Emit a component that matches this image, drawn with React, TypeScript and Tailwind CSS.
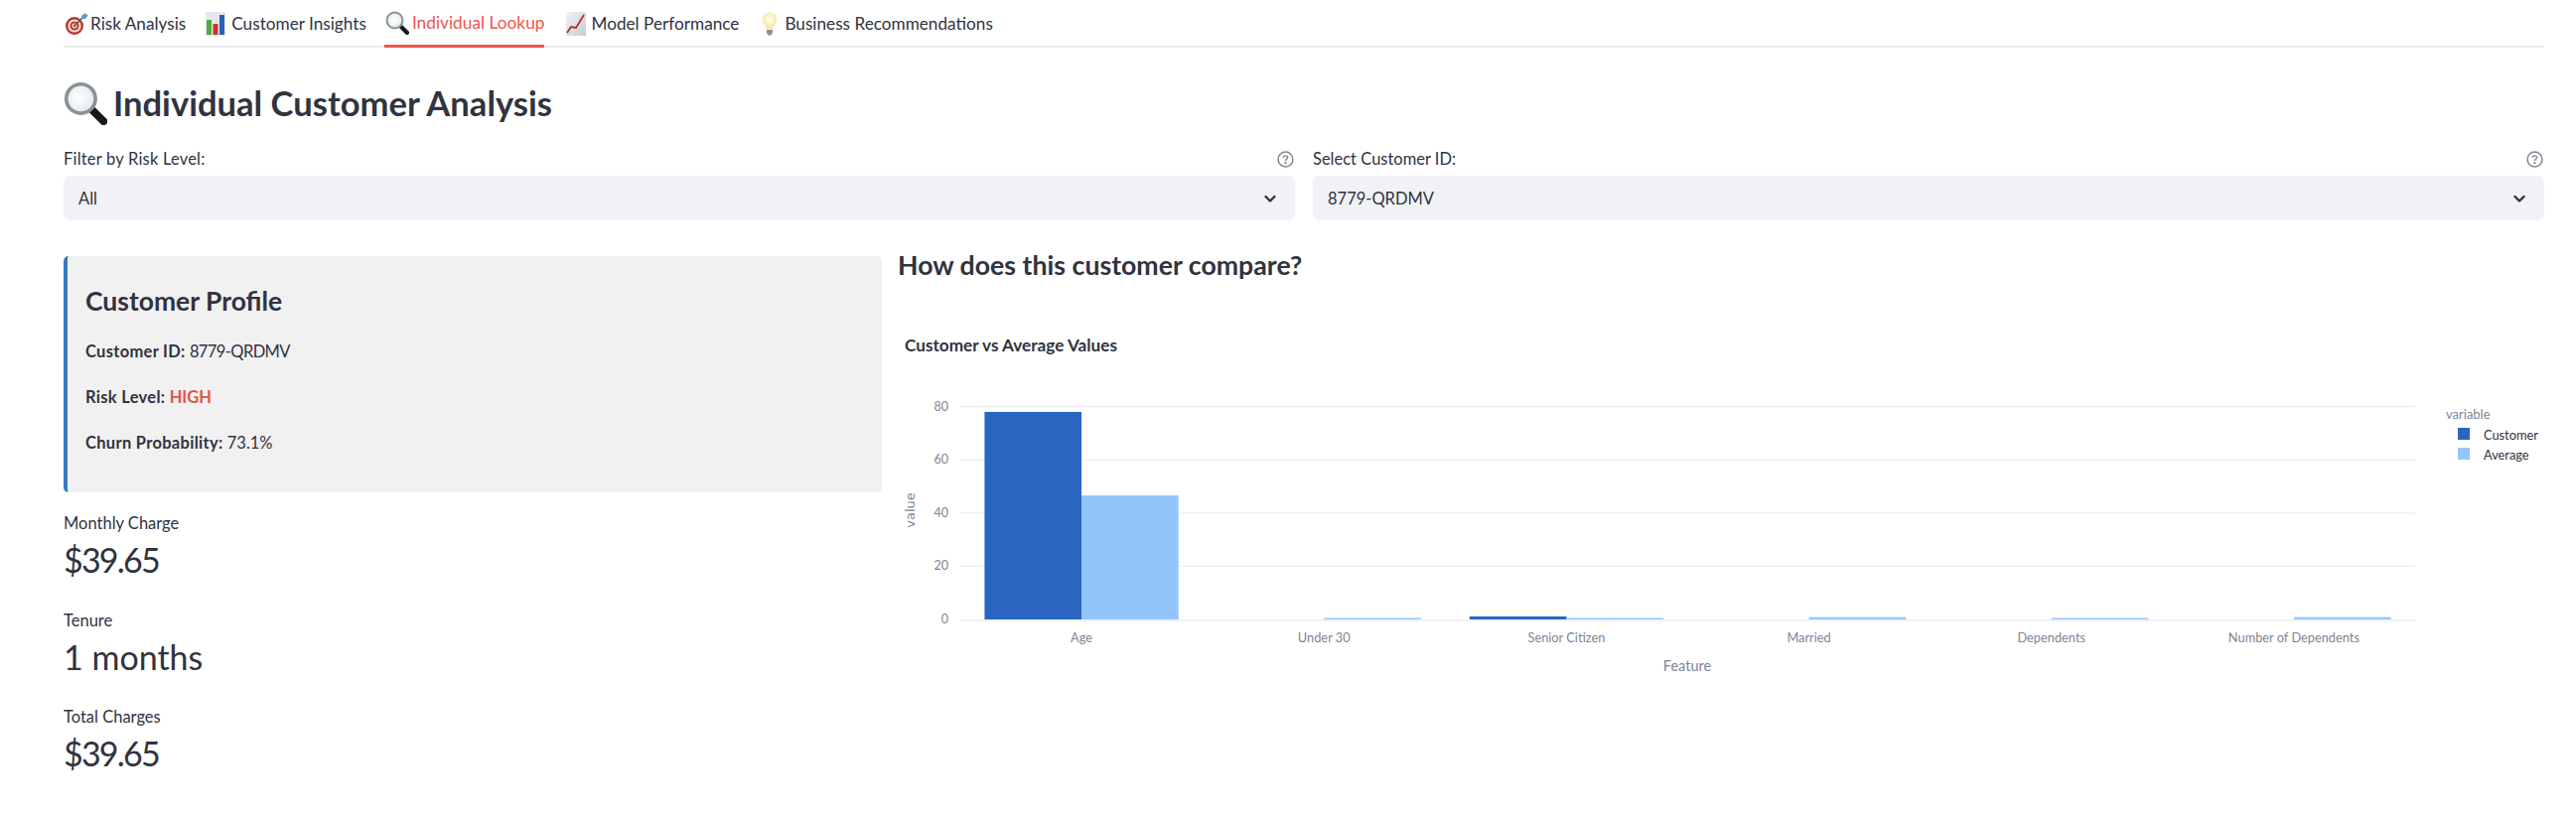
const font = { fontFamily: '"Lato", "Noto Sans", sans-serif' };

const TargetIcon = () => (
  <svg width="24" height="24" viewBox="0 0 24 24">
    <circle cx="10" cy="14" r="9" fill="#b8342c" />
    <circle cx="10" cy="14" r="6.6" fill="#f0e4dc" />
    <circle cx="10" cy="14" r="4.6" fill="#c43a30" />
    <circle cx="10" cy="14" r="2.5" fill="#f0e4dc" />
    <circle cx="10" cy="14" r="1.2" fill="#b8342c" />
    <path d="M10 14 L19 5" stroke="#56606a" strokeWidth="1.6" />
    <path d="M17 4 L21 1 L22 3 L24 3 L21 7 L18 7 Z" fill="#4fa3c7" />
  </svg>
);

const BarsIcon = () => (
  <svg width="20" height="24" viewBox="0 0 20 24">
    <rect x="0" y="0" width="20" height="24" fill="#e3e8ee" />
    <rect x="1" y="8" width="5" height="15" fill="#4caf3c" />
    <rect x="7.5" y="12" width="5" height="11" fill="#c8352b" />
    <rect x="14" y="3" width="5" height="20" fill="#2a62b8" />
  </svg>
);

const LensIcon = ({ size }: { size: number }) => (
  <svg width={size} height={size} viewBox="0 0 24 24">
    <defs>
      <radialGradient id={`lens${size}`} cx="0.45" cy="0.45" r="0.6">
        <stop offset="0" stopColor="#ffffff" />
        <stop offset="1" stopColor="#e2e6e8" />
      </radialGradient>
    </defs>
    <path d="M15 15 L22 22" stroke="#16181a" strokeWidth="4.2" strokeLinecap="round" />
    <circle cx="9.5" cy="9.5" r="8" fill={`url(#lens${size})`} stroke="#8b9296" strokeWidth="2" />
  </svg>
);

const LineIcon = () => (
  <svg width="20" height="24" viewBox="0 0 20 24">
    <defs>
      <linearGradient id="paper" x1="0" y1="0" x2="1" y2="1">
        <stop offset="0" stopColor="#f2f4f6" />
        <stop offset="1" stopColor="#c6ccd4" />
      </linearGradient>
    </defs>
    <rect width="20" height="24" fill="url(#paper)" />
    <path d="M1 21 L5 15 L10 16 L18 3" fill="none" stroke="#b5302a" strokeWidth="1.8" />
  </svg>
);

const BulbIcon = () => (
  <svg width="16" height="24" viewBox="0 0 16 24">
    <defs>
      <radialGradient id="glow" cx="0.5" cy="0.4" r="0.6">
        <stop offset="0" stopColor="#fffdf0" />
        <stop offset="1" stopColor="#f7e49a" />
      </radialGradient>
    </defs>
    <path d="M8 0.5 C3.5 0.5 0.5 3.6 0.5 7.6 C0.5 11.4 4.4 13.2 4.8 17.5 L11.2 17.5 C11.6 13.2 15.5 11.4 15.5 7.6 C15.5 3.6 12.5 0.5 8 0.5 Z" fill="url(#glow)" />
    <path d="M5 18 H11 V21 L9.5 23.5 H6.5 L5 21 Z" fill="#8d8f92" />
  </svg>
);

const tabs = [
  { label: "Risk Analysis", icon: <TargetIcon />, box: "w-[27px] pl-[1px]", gap: "" },
  { label: "Customer Insights", icon: <BarsIcon />, box: "w-[30px] pl-[4px]", gap: "mr-[2px]" },
  { label: "Individual Lookup", icon: <LensIcon size={24} />, box: "w-[28px] pl-[1px]", gap: "", active: true },
  { label: "Model Performance", icon: <LineIcon />, box: "w-[31px] pl-[6px]", gap: "" },
  { label: "Business Recommendations", icon: <BulbIcon />, box: "w-[30px] pl-[7px]", gap: "" },
];

const HelpIcon = () => (
  <svg width="17" height="17" viewBox="0 0 16 16" fill="none" stroke="#7f8290" strokeWidth="1.3">
    <circle cx="8" cy="8" r="7" />
    <path d="M6 6.3 C6 4 10 4 10 6.3 C10 7.8 8 7.8 8 9.4" />
    <circle cx="8" cy="11.5" r="0.4" fill="#7f8290" />
  </svg>
);

const Chevron = () => (
  <svg width="20" height="20" viewBox="0 0 20 20" fill="none" stroke="#31333f" strokeWidth="2.4" strokeLinecap="round" strokeLinejoin="round">
    <path d="M5.5 8 L10 12.5 L14.5 8" />
  </svg>
);

const Picker = ({ label, value, wide, tracking }: { label: string; value: string; wide: string; tracking: string }) => (
  <div className={wide}>
    <div className="flex h-[21px] items-center justify-between pr-[1px] text-[16.5px] text-[#31333f]">
      <span className={tracking}>{label}</span>
      <HelpIcon />
    </div>
    <div className="mt-[6px] flex h-[45px] items-center justify-between rounded-[7px] bg-[#f0f2f6] pl-[15px] pr-[15px] pt-[1px] text-[16.5px] text-[#31333f]">
      <span>{value}</span>
      <Chevron />
    </div>
  </div>
);

const metrics = [
  { label: "Monthly Charge", value: "$39.65", tracking: "tracking-[-1.8px]" },
  { label: "Tenure", value: "1 months", tracking: "" },
  { label: "Total Charges", value: "$39.65", tracking: "tracking-[-1.8px]" },
];

// chart geometry, in the svg's own pixels
const plotLeft = 63;
const plotRight = 1528;
const zeroY = 304;
const unit = 2.68;
const band = (plotRight - plotLeft) / 6;

const groups = [
  { name: "Age", customer: 78, average: 46.6 },
  { name: "Under 30", customer: 0, average: 0.56 },
  { name: "Senior Citizen", customer: 1.12, average: 0.56 },
  { name: "Married", customer: 0, average: 0.85 },
  { name: "Dependents", customer: 0, average: 0.56 },
  { name: "Number of Dependents", customer: 0, average: 0.85 },
];

const CompareChart = () => (
  <svg width="1658" height="380" className="block" style={font}>
    <text x="7" y="34" fontSize="17.2" fontWeight="700" fill="#31333f">Customer vs Average Values</text>
    {[20, 40, 60, 80].map((tick) => (
      <line key={tick} x1={plotLeft} x2={plotRight} y1={zeroY - tick * unit} y2={zeroY - tick * unit} stroke="#eceef2" strokeWidth="1.2" />
    ))}
    <line x1={plotLeft} x2={plotRight} y1={zeroY + 1} y2={zeroY + 1} stroke="#f0f1f5" strokeWidth="2" />
    {[0, 20, 40, 60, 80].map((tick) => (
      <text key={tick} x="51" y={zeroY - tick * unit + 4} fontSize="12.5" textAnchor="end" fill="#808495">{tick}</text>
    ))}
    {groups.map((group, i) => {
      const x = plotLeft + band * i;
      return (
        <g key={group.name}>
          <rect x={x + band * 0.1} y={zeroY - group.customer * unit} width={band * 0.4} height={group.customer * unit} fill="#2a66c0" />
          <rect x={x + band * 0.5} y={zeroY - group.average * unit} width={band * 0.4} height={group.average * unit} fill="#93c5fb" />
          <text x={x + band / 2} y={327} fontSize="12.8" textAnchor="middle" fill="#808495">{group.name}</text>
        </g>
      );
    })}
    <text x="795" y="356" fontSize="14.5" textAnchor="middle" fill="#808495">Feature</text>
    <text transform="translate(17 194) rotate(-90)" fontSize="13" textAnchor="middle" fill="#808495" style={{ fontFamily: '"DejaVu Sans", sans-serif' }}>value</text>
    <text x="1559" y="102" fontSize="13" fill="#808495">variable</text>
    <rect x="1571" y="111" width="12" height="12" fill="#2a66c0" />
    <text x="1597" y="123" fontSize="12.8" fill="#31333f">Customer</text>
    <rect x="1571" y="131" width="12" height="12" fill="#93c5fb" />
    <text x="1597" y="143" fontSize="12.8" fill="#31333f">Average</text>
  </svg>
);

export default function App() {
  return (
    <div className="h-[820px] overflow-hidden bg-white pl-[64px] pr-[32px] text-[#31333f]" style={font}>
      <div className="flex h-[48px] gap-4 border-b-2 border-[#ebecee]">
        {tabs.map((tab) => (
          <div
            key={tab.label}
            className={
              tab.active
                ? "-mb-[2px] flex h-[48px] items-center border-b-[3px] border-[#f0564f] text-[17.3px] text-[#f0564f]"
                : `flex h-[46px] items-center pt-[1px] text-[17.2px] ${tab.gap}`
            }
          >
            <span className={`${tab.box} flex`}>{tab.icon}</span>
            <span>{tab.label}</span>
          </div>
        ))}
      </div>

      <h1 className="mt-[33px] flex h-[46px] items-center gap-[6px] text-[34.6px] font-bold leading-none">
        <LensIcon size={44} />
        <span>Individual Customer Analysis</span>
      </h1>

      <div className="mt-[23px] flex gap-[18px]">
        <Picker label="Filter by Risk Level:" value="All" wide="w-[1240px]" tracking="tracking-[0.2px]" />
        <Picker label="Select Customer ID:" value="8779-QRDMV" wide="flex-1" tracking="" />
      </div>

      <div className="mt-[36px] flex gap-4">
        <div className="w-[824px]">
          <div className="h-[238px] rounded-[5px] border-l-[4px] border-[#3778c2] bg-[#f1f1f1] pl-[18px] pt-[28px]">
            <h3 className="h-[34px] text-[26.5px] font-bold leading-[34px]">Customer Profile</h3>
            <div className="mt-[24px] flex flex-col gap-[25px] text-[16.5px] leading-[21px]">
              <p><b className="tracking-[0.3px]">Customer ID:</b> <span className="tracking-[-0.6px]">8779-QRDMV</span></p>
              <p><b className="tracking-[0.3px]">Risk Level:</b> <b className="text-[#e2524b]">HIGH</b></p>
              <p><b className="tracking-[0.3px]">Churn Probability:</b> 73.1%</p>
            </div>
          </div>
          <div className="mt-[20px] flex flex-col gap-[22.5px]">
            {metrics.map((metric) => (
              <div key={metric.label}>
                <div className="h-[22px] text-[16.5px] leading-[22px]">{metric.label}</div>
                <div className={`h-[53px] text-[34px] leading-[51px] ${metric.tracking}`}>{metric.value}</div>
              </div>
            ))}
          </div>
        </div>

        <div className="flex-1">
          <h3 className="h-[26px] text-[26.7px] font-bold leading-[18px]">How does this customer compare?</h3>
          <div className="mt-[36px]">
            <CompareChart />
          </div>
        </div>
      </div>
    </div>
  );
}
